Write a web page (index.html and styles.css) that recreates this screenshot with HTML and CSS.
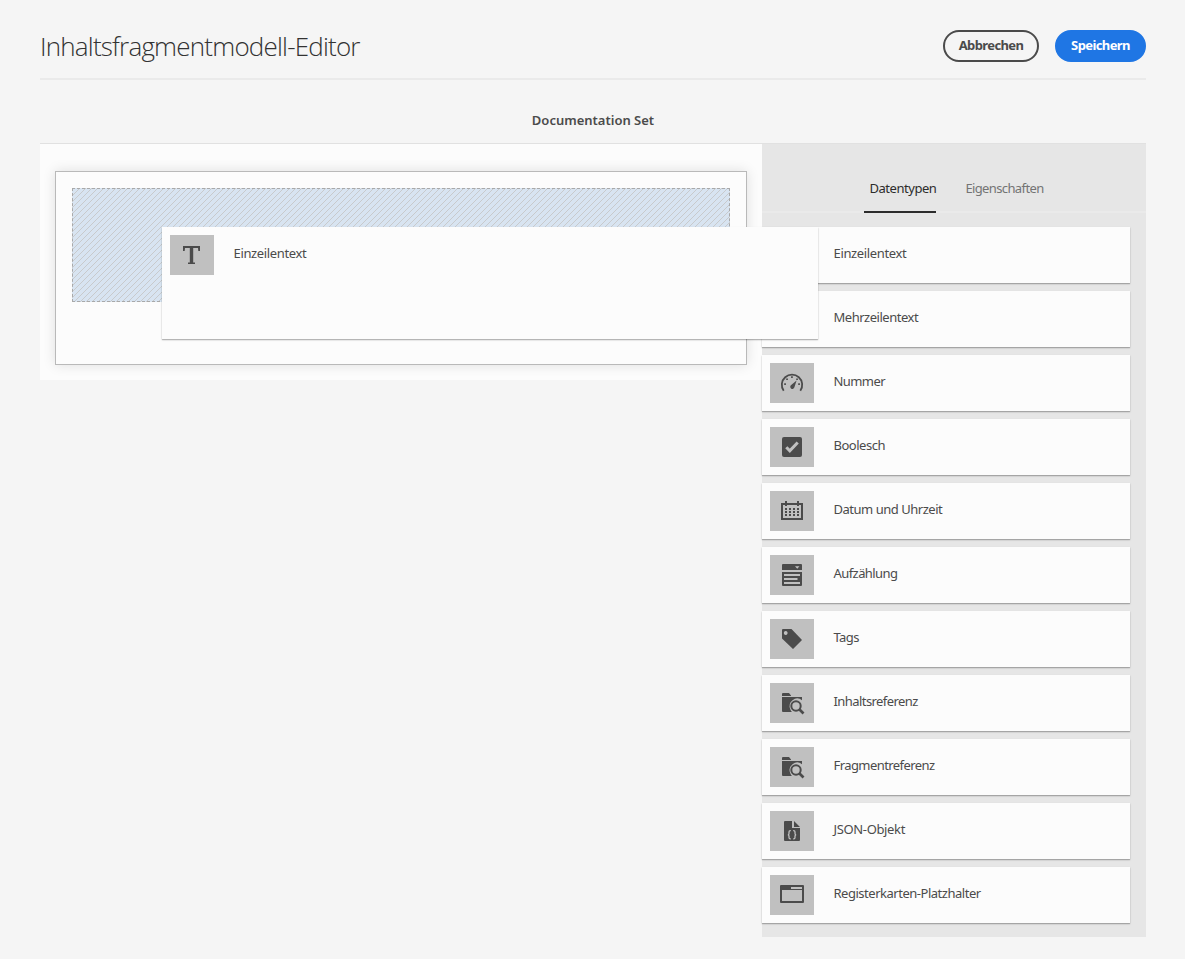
FILE: index.html
```
<!DOCTYPE html>
<html lang="de">
<head>
<meta charset="utf-8">
<title>Inhaltsfragmentmodell-Editor</title>
<link rel="stylesheet" href="styles.css">
</head>
<body>
<svg class="defs" width="0" height="0">
  <symbol id="folder-search" viewBox="0 0 44 40">
    <path d="M12 11q0-1 1-1h6l2 2.500V13h-9zM12 14h20v3.200a7.600 7.600 0 0 0-11.600 9.200a7.600 7.600 0 0 0 1.600 2.600H13q-1 0-1-1z"/>
    <circle cx="26" cy="23" r="4.700" class="line"/><path d="M29.500 26.500l4 4" class="line thick"/>
  </symbol>
</svg>
<div class="page">
  <header class="header">
    <h1 class="title">Inhaltsfragmentmodell-Editor</h1>
    <button class="btn btn-cancel">Abbrechen</button>
    <button class="btn btn-save">Speichern</button>
  </header>
  <h2 class="model-name"><span>Documentation Set</span></h2>
  <main class="editor">
    <section class="canvas">
      <div class="frame"><div class="drop-zone"></div></div>
    </section>
    <aside class="sidebar">
      <nav class="tabs"><a class="tab active"><span>Datentypen</span></a><a class="tab"><span>Eigenschaften</span></a></nav>
      <ul class="types">
        <li class="card"><span class="icon"></span><span class="label wide">Einzeilentext</span></li>
        <li class="card"><span class="icon"></span><span class="label">Mehrzeilentext</span></li>
        <li class="card"><svg class="icon" viewBox="0 0 44 40"><path class="line thin" d="M13.700 27.800A10.200 10.200 0 1 1 30.300 27.800"/><path d="M14.200 20.200h1.700v1.700h-1.700zM16.200 15.400h1.700v1.700h-1.700zM21.100 13.200h1.700v1.700h-1.700zM28.200 20.200h1.700v1.700h-1.700zM26.200 15.400h1.700v1.700h-1.700zM26.600 17.600L24.400 24.300a2.100 2.100 0 1 1-3.500-2z"/></svg><span class="label tight">Nummer</span></li>
        <li class="card"><svg class="icon" viewBox="0 0 44 40"><rect x="12" y="10" width="20" height="20" rx="2"/><path class="cut" d="M16.300 20.300l3.500 3.600L27.700 15.500"/></svg><span class="label">Boolesch</span></li>
        <li class="card"><svg class="icon" viewBox="0 0 44 40"><path fill-rule="evenodd" d="M15 10h2v2h10v-2h2v2h4v17H11V12h4zM13 14v13h18V14h-2v1h-2v-1H17v1h-2v-1z"/><path d="M15 17h2v2h-2zM19 17h2v2h-2zM23 17h2v2h-2zM27 17h2v2h-2zM15 20h2v2h-2zM19 20h2v2h-2zM23 20h2v2h-2zM27 20h2v2h-2zM15 23h2v2h-2zM19 23h2v2h-2zM23 23h2v2h-2zM27 23h2v2h-2z"/></svg><span class="label">Datum und Uhrzeit</span></li>
        <li class="card"><svg class="icon" viewBox="0 0 44 40"><path fill-rule="evenodd" d="M13 9h18q1 0 1 1v5H12v-5q0-1 1-1zM25 11.300h4.500l-2.250 2.500zM12 17h20v13q0 1-1 1H13q-1 0-1-1zM14 19v2h16v-2zM14 23v2h13.500v-2zM14 27v2h16v-2z"/></svg><span class="label tight">Aufzählung</span></li>
        <li class="card"><svg class="icon" viewBox="0 0 44 40"><path fill-rule="evenodd" d="M13 10h8.500l10.500 11-9 9L12 19.500V11q0-1 1-1zM15.700 12.100a1.900 1.900 0 1 0 .01 0z"/></svg><span class="label tight">Tags</span></li>
        <li class="card"><svg class="icon" viewBox="0 0 44 40"><use href="#folder-search"/></svg><span class="label tight">Inhaltsreferenz</span></li>
        <li class="card"><svg class="icon" viewBox="0 0 44 40"><use href="#folder-search"/></svg><span class="label tight">Fragmentreferenz</span></li>
        <li class="card"><svg class="icon" viewBox="0 0 44 40"><path d="M15 10h7v7h8v12q0 1-1 1H15q-1 0-1-1V11q0-1 1-1zM24 10l6 6h-6z"/><path class="brace" d="M20.800 19.700h-.5q-1.300 0-1.300 1.300v1.500q0 1.300-1.200 1.300q1.200 0 1.200 1.300v1.500q0 1.300 1.300 1.300h.5M23.200 19.700h.5q1.300 0 1.300 1.300v1.500q0 1.300 1.200 1.300q-1.200 0-1.200 1.300v1.500q0 1.300-1.300 1.300h-.5"/></svg><span class="label wide">JSON-Objekt</span></li>
        <li class="card"><svg class="icon" viewBox="0 0 44 40"><path fill-rule="evenodd" d="M11 10h22q1 0 1 1v16q0 1-1 1H11q-1 0-1-1V11q0-1 1-1zM21 12v2h11v-2zM12 15v11h20V15z"/></svg><span class="label">Registerkarten-Platzhalter</span></li>
      </ul>
    </aside>
    <div class="card dragged"><svg class="icon" viewBox="0 0 44 40"><path d="M13 11h17v5h-1.700l-.3-3h-4.800v14.400h1.800V29h-7v-1.600h1.800V13H15l-.3 3H13z"/></svg><span class="label wide">Einzeilentext</span></div>
  </main>
</div>
</body>
</html>
```
FILE: styles.css
```
* { box-sizing: border-box; }
body { margin: 0; background: #f5f5f5; color: #4b4b4b; font-family: "Noto Sans", "Open Sans", sans-serif; font-size: 13px; }
.defs { display: block; position: absolute; }
.page { padding: 0 39px 22px 40px; }
.header { display: flex; gap: 16px; height: 80px; padding-top: 30px; border-bottom: 2px solid #eaeaea; }
.title { flex: 1; margin: 0; font-family: "Open Sans", "Noto Sans", sans-serif; font-size: 26px; font-weight: 300; line-height: 32px; letter-spacing: -.8px; color: #323232; white-space: nowrap; }
.btn { height: 32px; padding: 0 0 2px; border-radius: 16px; font: 700 13px/26px "Noto Sans", sans-serif; letter-spacing: -.6px; }
.btn-cancel { width: 96px; border: 2px solid #4b4b4b; background: transparent; color: #4b4b4b; }
.btn-save { width: 91px; border: 2px solid #1f76e4; background: #1f76e4; color: #fff; }
.model-name { height: 63px; margin: 0; padding-top: 31px; text-align: center; font-size: 13px; line-height: 18px; font-weight: 600; }
.editor { position: relative; display: flex; align-items: flex-start; border-top: 1px solid #e1e1e1; }
.canvas { width: 722px; height: 236px; padding: 27px 15px 15px; background: #fcfcfc; }
.frame { height: 194px; padding: 16px; border: 1px solid #b9b9b9; background: #fcfcfc; box-shadow: 0 0 12px rgba(0,0,0,.12); }
.drop-zone { height: 114px; border: 1px dashed #a9a9a9; background: linear-gradient(135deg, #d8e4f1 46%, #c8cacc 46% 54%, #d8e4f1 54%) 0 0 / 6px 6px; }
.sidebar { width: 384px; height: 793px; background: #e6e6e6; }
.tabs { display: flex; justify-content: center; gap: 24px; height: 69px; border-bottom: 2px solid #eaeaea; }
.tab { height: 69px; padding: 34px 0 0 5px; line-height: 20px; color: #747474; letter-spacing: -.62px; }
.tab.active { width: 72px; color: #2c2c2c; border-bottom: 2px solid #2c2c2c; letter-spacing: -.45px; }
.types { display: grid; gap: 8px; margin: 0; padding: 14px 16px 0 0; list-style: none; }
.card { display: flex; gap: 19.5px; height: 56px; padding: 8px; background: #fcfcfc; box-shadow: 0 1px 1px rgba(0,0,0,.2), 0 1px 2px rgba(0,0,0,.15); }
.icon { width: 44px; height: 40px; background: #c0c0c0; fill: #4b4b4b; }
.line { fill: none; stroke: #4b4b4b; stroke-width: 2; }
.thin { stroke-width: 1.8; }
.thick { stroke-width: 2.6; }
.cut { fill: none; stroke: #c0c0c0; stroke-width: 3; }
.brace { fill: none; stroke: #c0c0c0; stroke-width: 1.3; }
.label { line-height: 20px; margin-top: 8px; white-space: nowrap; letter-spacing: -.48px; }
.label.tight { letter-spacing: -.57px; }
.label.wide { letter-spacing: -.35px; }
.dragged { position: absolute; left: 122px; top: 83px; width: 656px; height: 112px; }
```
